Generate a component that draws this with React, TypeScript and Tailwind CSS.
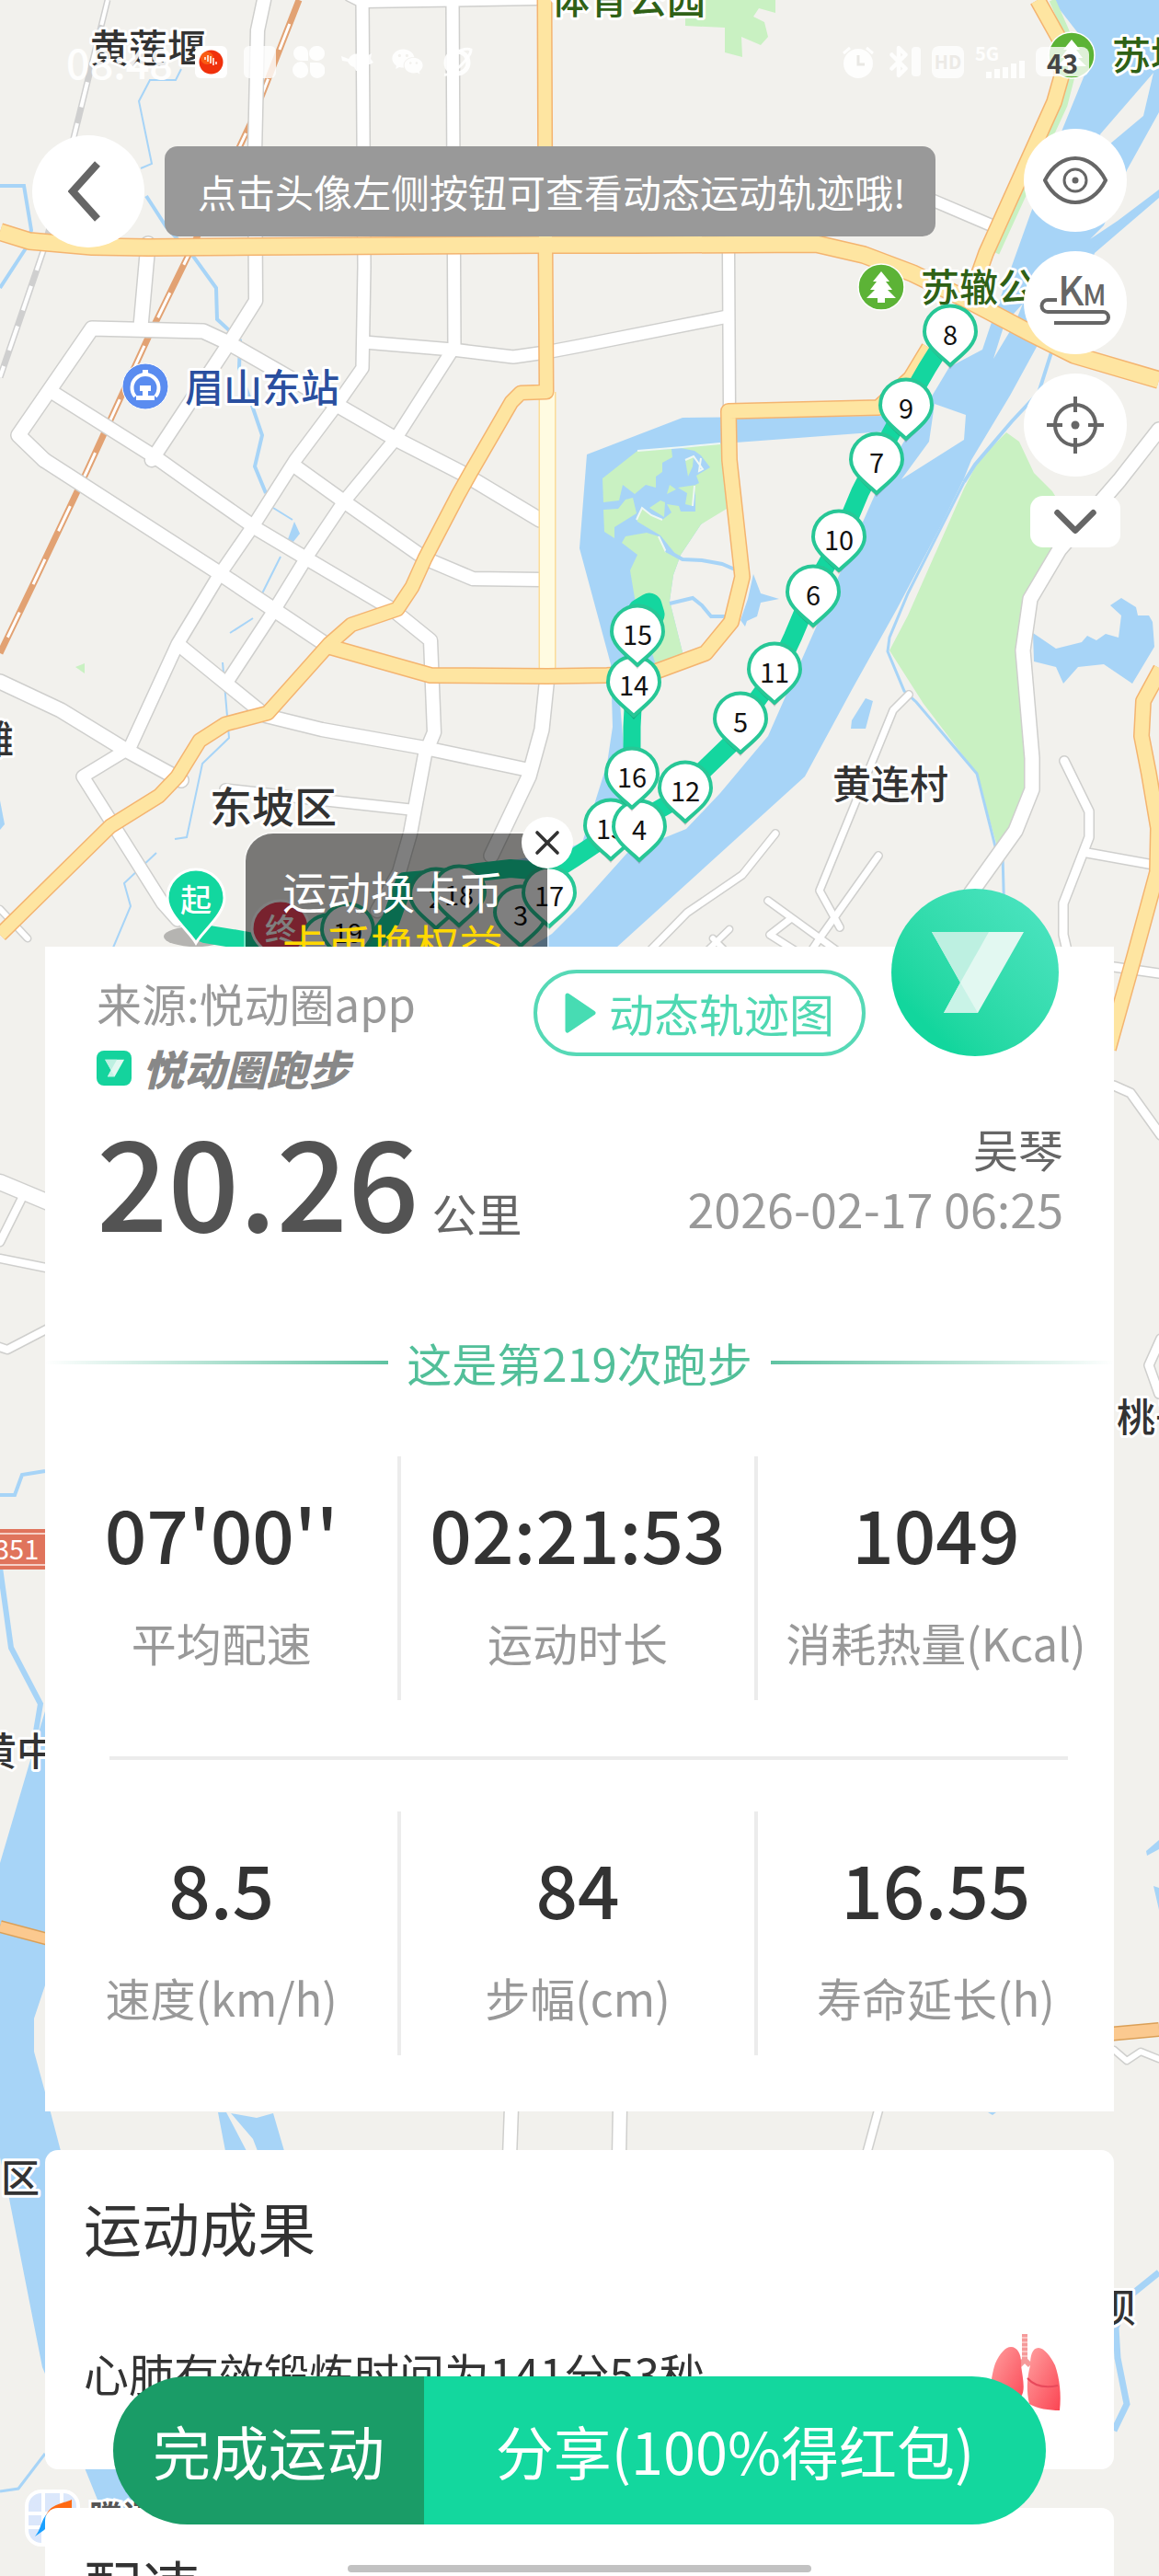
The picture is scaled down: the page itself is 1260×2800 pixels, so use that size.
import React from 'react'
import { Bluetooth, ChevronDown, X } from 'lucide-react'
import { AiFillWechat } from 'react-icons/ai'

type Road = { d: string; w: number }

const WATER = [
  'M1144 0 1260 0 1260 122 1225 185 1200 245 1185 260 1215 240 1260 206 1260 215 1190 275 1170 330 1127 377 1098 430 1056 500 1048 520 1024 569 975 662 927 748 875 844 670 1030 560 1040 600 1015 630 985 682 927 746 901 783 862 835 800 887 682 951 538 979 486 1008 439 1032 399 1068 380 1076 356 1120 233 1156 138 1180 79 1172 36Z',
  'M742 454 965 452 975 468 800 481 784 482 785 553 762 570 740 603 732 625 728 653 743 713 713 723 690 730 672 740 682 860 690 890 640 925 600 938 450 958 452 952 600 928 633 916 660 830 666 790 664 722 630 596 638 494Z',
  'M819 624 827 645 847 651 827 655 823 670 812 675 810 681 805 674 813 651Z',
  'M1123 688 1148 705 1176 698 1182 691 1192 696 1202 689 1216 693 1219 669 1207 658 1219 650 1235 660 1237 669 1249 669 1253 676 1255 703 1231 743 1200 722 1172 725 1156 743 1148 725 1124 719Z',
  'M941 759 949 762 941 792 925 792 926 783Z',
  'M320 567 326 580 318 590 313 586Z',
  'M0 2025 36 1903 49 1860 49 2158 37 2194 37 2230 55 2296 66 2338 180 2740 110 2727 93 2685 46 2573 10 2390 0 2345Z',
  'M237 2296 246 2296 268 2338 245 2338Z',
  'M251 2297 279 2302 297 2297 309 2338 280 2338 275 2325Z',
  'M1246 2012 1260 2000 1260 2010 1247 2017Z',
  'M1254 2050 1260 2052 1260 2076Z',
  'M1074 2296 1083 2296 1079 2299Z',
  'M0 870 5 896 0 902Z',
]

const LAND = [
  'M1254 79 1243 126 1200 162 1196 146Z',
  'M1112 330 1104 350 1080 390 1092 352Z',
  'M1016 439 1050 451 1048 478 980 521 1010 480Z',
]

const PARKS = [
  'M1094 470 1108 480 1124 514 1144 534 1160 560 1152 593 1120 651 1112 707 1122 824 1122 858 1104 903 1084 920 1062 841 1004 765 967 707 987 669 1048 531 1064 500Z',
  'M693 490 730 488 731 497 720 503 720 513 713 518 713 530 702 527 690 537 677 527 673 544 656 546 655 520Z',
  'M656 554 672 553 680 543 688 541 692 558 668 573 668 585 657 578Z',
  'M740 487 785 482 785 500 790 553 762 570 740 603 732 625 728 653 743 713 713 723 690 650 685 620 693 603 676 590 680 583 703 579 716 583 724 600 735 603 718 582 693 567 692 562 698 552 708 560 720 565 730 557 725 548 738 550 740 556 756 556 756 527 760 525 757 517 772 508 762 495 755 490Z',
  'M745 500 754 496 753 507 748 518Z',
  'M706 552 718 544 723 546 722 562Z',
  'M725 537 728 527 735 532Z',
  'M737 530 757 527 753 550 745 548 747 536Z',
  'M745 0 745 28 788 30 788 57 807 62 806 40 827 49 835 40 831 24 819 18 825 9 843 14 843 0Z',
  'M92 721 92 732 82 725Z',
]

const STREAMS: Road[] = [
  { d: 'M197 75 191 87 163 87 151 110 165 178 153 183', w: 2 },
  { d: 'M159 213 181 247 209 277 235 313 236 347 261 370 260 400 285 473 277 507 289 536', w: 4 },
  { d: 'M297 552 318 565M305 605 285 645M275 672 250 688M242 720 249 802 220 830 203 910 190 912M170 927 135 960 142 985 123 1030', w: 2 },
  { d: 'M0 202 26 202 34 250 28 270 0 313', w: 4 },
  { d: 'M1048 524 987 645 967 693 965 708 983 751 996 763 1062 841 1082 920 1090 930 1092 1000', w: 3 },
  { d: 'M724 598 742 608 763 609 785 613 799 619M728 656 753 650 763 658 773 670 789 670', w: 4 },
  { d: 'M1260 210 1188 272M1143 383 1129 427 1100 458 1060 505 1048 524', w: 4 },
  { d: 'M0 1625 16 1625 24 1603 49 1599', w: 4 },
  { d: 'M0 1704 12 1791 44 1852 36 1900', w: 6 },
  { d: 'M0 2708 20 2705 49 2667', w: 3 },
  { d: 'M1260 2470 1229 2495 1213 2530 1215 2563 1225 2613 1211 2642', w: 7 },
]

const WHITE_ROADS: Road[] = [
  { d: 'M287 0 280 33 277 167 278 327 249 373 165 500', w: 14 },
  { d: 'M394 0 396 290 394 400 366 440 321 500 277 569 237 627 193 700 141 813 90 844 177 982 193 1000', w: 13 },
  { d: 'M492 0 494 377 430 477 374 545 337 600 297 665 249 738', w: 13 },
  { d: 'M380 -4 394 3 583 0', w: 10 },
  { d: 'M396 372 492 380 558 388 593 383 630 376 791 344', w: 13 },
  { d: 'M161 265 153 355', w: 15 },
  { d: 'M48 500 20 473 100 357 221 360 249 373 366 440 430 477 502 514 587 565', w: 15 },
  { d: 'M48 500 237 622 358 703', w: 15 },
  { d: 'M58 427 169 497 221 534 281 576 333 607 426 662 468 696 472 796 462 820 446 906 434 948 410 990', w: 14 },
  { d: 'M321 507 378 548 462 607 514 629 589 630', w: 14 },
  { d: 'M197 703 289 778 350 793 462 813 575 837', w: 14 },
  { d: 'M595 735 589 793 575 844 534 930', w: 15 },
  { d: 'M0 741 66 772 133 813 197 848', w: 15 },
  { d: 'M245 858 446 880', w: 11 },
  { d: 'M792 273 793 447', w: 12 },
  { d: 'M1010 216 1078 245', w: 12 },
  { d: 'M1260 467 1217 522 1152 597 1120 651 1112 707 1122 824 1122 858 1104 903 1056 970 1010 1050', w: 15 },
  { d: 'M988 755 971 772 891 968 913 1008', w: 7 },
  { d: 'M955 930 891 1020 871 1050', w: 7 },
  { d: 'M835 979 919 1040M859 999 837 1016 875 1040', w: 7 },
  { d: 'M843 906 807 951 747 992 700 1040', w: 7 },
  { d: 'M793 1010 762 1040M775 1020 795 1040', w: 6 },
  { d: 'M1157 827 1184 882 1184 910 1156 982 1156 1016 1164 1050M1182 927 1260 941', w: 9 },
  { d: 'M1211 1051 1260 1058M1211 1180 1229 1188 1262 1234M1262 1455 1249 1484 1260 1515', w: 9 },
  { d: 'M0 1285 60 1310', w: 16 },
  { d: 'M24 1302 0 1350M0 1368 60 1380M-4 1463 8 1467 60 1440', w: 8 },
  { d: 'M0 988 30 1020', w: 6 },
  { d: 'M556 2290 554 2345M674 2290 673 2345', w: 14 },
  { d: 'M956 2290 941 2345', w: 8 },
  { d: 'M1211 2228 1225 2240 1240 2230 1260 2238', w: 6 },
]

const YELLOW_ROADS: Road[] = [
  { d: 'M0 252 32 262 100 268 161 269 281 268 593 266 690 266 887 265 939 277 992 297 1048 324 1120 362 1168 386 1260 413', w: 17 },
  { d: 'M592 -5 593 266 594 426 566 427 556 437 512 513 498 538 462 607 448 638 432 662 382 679 358 700 291 775 245 787 217 805 193 844 173 865 120 898 0 1016', w: 14 },
  { d: 'M358 703 468 734 595 735 660 734 710 731 767 710 795 676 807 627 793 500 792 447 955 443 990 411 1010 378', w: 15 },
  { d: 'M1128 0 1152 43 1154 83 1146 111 1072 275 1056 320', w: 15 },
  { d: 'M1262 727 1243 762 1241 800 1249 841 1259 900 1258 948 1233 1040 1205 1140', w: 15 },
]

const ORANGE_ROADS: Road[] = [
  { d: 'M0 2094 60 2110', w: 11 },
  { d: 'M1205 2211 1260 2206', w: 13 },
]

type Pin = { x: number; y: number; n: string }

// drawn in order, later ones lie on top
const PINS: Pin[] = [
  { x: 357, y: 993, n: '1' },
  { x: 378, y: 981, n: '19' },
  { x: 474, y: 943, n: '2' },
  { x: 499, y: 940, n: '18' },
  { x: 566, y: 962, n: '3' },
  { x: 597, y: 941, n: '17' },
  { x: 664, y: 868, n: '13' },
  { x: 695, y: 869, n: '4' },
  { x: 745, y: 827, n: '12' },
  { x: 687, y: 812, n: '16' },
  { x: 689, y: 712, n: '14' },
  { x: 693, y: 657, n: '15' },
  { x: 805, y: 752, n: '5' },
  { x: 842, y: 698, n: '11' },
  { x: 884, y: 614, n: '6' },
  { x: 912, y: 554, n: '10' },
  { x: 953, y: 470, n: '7' },
  { x: 985, y: 411, n: '9' },
  { x: 1033, y: 331, n: '8' },
]

const LABELS = [
  { x: 98, y: 68, t: '黄莲堰', c: '#333333', s: 42 },
  { x: 599, y: 15, t: '体育公园', c: '#2f6116', s: 42 },
  { x: 1209, y: 76, t: '苏坟山', c: '#2f6116', s: 42 },
  { x: 1001, y: 328, t: '苏辙公园', c: '#2f6116', s: 42 },
  { x: 201, y: 437, t: '眉山东站', c: '#2a4f9f', s: 42 },
  { x: 228, y: 894, t: '东坡区', c: '#333333', s: 46 },
  { x: -27, y: 819, t: '滩', c: '#333333', s: 42 },
  { x: 905, y: 868, t: '黄连村', c: '#333333', s: 42 },
  { x: 1214, y: 1556, t: '桃子', c: '#333333', s: 42 },
  { x: -24, y: 1919, t: '黄中', c: '#333333', s: 42 },
  { x: 1, y: 2383, t: '区', c: '#333333', s: 42 },
  { x: 1193, y: 2524, t: '坝', c: '#333333', s: 42 },
]

const STATS = [
  [
    { value: "07'00''", label: '平均配速' },
    { value: '02:21:53', label: '运动时长' },
    { value: '1049', label: '消耗热量(Kcal)' },
  ],
  [
    { value: '8.5', label: '速度(km/h)' },
    { value: '84', label: '步幅(cm)' },
    { value: '16.55', label: '寿命延长(h)' },
  ],
]

const Roads: React.FC<{ roads: Road[]; fill: string; edge: string; cap: 'round' | 'butt' }> = ({ roads, fill, edge, cap }) => (
  <g fill="none" strokeLinejoin="round" strokeLinecap={cap}>
    {roads.map((r) => <path key={r.d} d={r.d} stroke={edge} strokeWidth={r.w + 3} />)}
    {roads.map((r) => <path key={r.d} d={r.d} stroke={fill} strokeWidth={r.w} />)}
  </g>
)

const TreeIcon: React.FC<{ x: number; y: number }> = ({ x, y }) => (
  <g transform={`translate(${x} ${y})`}>
    <circle r="25" fill="#5cb336" stroke="#fff" strokeWidth="1.5" />
    <path d="M0-17 9-6H5L12 3H7L16 12H4V17H-4V12H-16L-7 3H-12L-5-6H-9Z" fill="#fff" />
  </g>
)

const MapCanvas: React.FC = () => (
  <svg
    className="absolute inset-0 h-full w-full font-['Noto_Sans_CJK_SC',sans-serif]"
    viewBox="0 0 1260 2800"
    preserveAspectRatio="xMidYMin slice"
    role="img"
    aria-label="运动轨迹地图"
  >
    <rect width="1260" height="2800" fill="#f2f1ed" />
    <g fill="#a7d4f7">{WATER.map((d) => <path key={d} d={d} />)}</g>
    <g fill="#f2f1ed">{LAND.map((d) => <path key={d} d={d} />)}</g>
    <g fill="#c9f1c2">{PARKS.map((d) => <path key={d} d={d} />)}</g>
    <path d="M1144 0 1163 43 1165 83 1157 114 1083 275" fill="none" stroke="#c9f1c2" strokeWidth="7" />
    {/* shore lines round the park ponds */}
    <path d="M693 490 742 486 783 482M692 565 698 552 708 560 720 565M716 583 724 600M745 500 754 496 764 510 760 512 762 498M755 528 753 550" fill="none" stroke="#eef7f4" strokeWidth="2" />
    <g fill="none" stroke="#a7d4f7">
      {STREAMS.map((s) => <path key={s.d} d={s.d} strokeWidth={s.w} />)}
    </g>

    <g fill="none">
      <path d="M117 0 80 150 48 270 0 410" stroke="#cfcfcf" strokeWidth="7" />
      <path d="M117 0 80 150 48 270 0 410" stroke="#fff" strokeWidth="4" strokeDasharray="28 18" />
      <path d="M325 0 273 133 205 277 161 367 94 513 38 631 0 710" stroke="#e2a273" strokeWidth="7" />
      <path d="M325 0 273 133 205 277 161 367 94 513 38 631 0 710" stroke="#fff" strokeWidth="3" strokeDasharray="30 34" strokeDashoffset="-28" />
    </g>

    <Roads roads={WHITE_ROADS} fill="#fff" edge="#cfcfcd" cap="round" />
    <path d="M595 426V735" stroke="#fbdc98" strokeWidth="19" />
    <path d="M595 426V735" stroke="#fffbe1" strokeWidth="16" />
    <Roads roads={YELLOW_ROADS} fill="#fee5a1" edge="#f4b470" cap="butt" />
    <Roads roads={ORANGE_ROADS} fill="#fbc98f" edge="#dba058" cap="butt" />

    <circle cx="158" cy="420" r="25" fill="#5a8cf0" stroke="#fff" strokeWidth="1" />
    <path d="M147 431A14.500 14.500 0 1 1 169 431" fill="none" stroke="#fff" strokeWidth="4" />
    <path d="M155 402H161V407H155ZM152 419H164V425H161V430H168V435H148V430H155V425H152Z" fill="#fff" />
    <TreeIcon x={958} y={312} />
    <TreeIcon x={1165} y={60} />

    <g>
      <rect x="-10" y="1662" width="70" height="44" fill="#e0745c" />
      <path d="M0 1667H60M0 1701H60" stroke="#f6cfc5" strokeWidth="2" />
      <text x="-6" y="1695" fontSize="29" fill="#fff">351</text>
    </g>

    <g strokeLinejoin="round" strokeWidth="6" stroke="#fff" fontWeight="500">
      {LABELS.map((l) => (
        <text key={l.t} x={l.x} y={l.y} fontSize={l.s} fill={l.c} paintOrder="stroke">{l.t}</text>
      ))}
    </g>

    <ellipse cx="213" cy="1018" rx="35" ry="11" fill="#000" opacity="0.25" />
    <g fill="none" stroke="#14d69f" strokeLinejoin="round" strokeLinecap="round">
      <path d="M222 1015 265 1022 330 1036 400 1034 425 1000 440 958 475 955 520 948 555 944 600 948 625 932 655 912 690 895 730 872 767 835 795 808 820 765 842 735 862 692 884 640 912 590 935 535 953 500 972 465 985 440 1008 400 1033 360 1046 345" strokeWidth="20" />
      <path d="M655 910 687 870 687 790 689 750 692 700 700 662" strokeWidth="19" />
      <path d="M696 664 706 658 709 668" strokeWidth="27" />
    </g>

    <g stroke="#fff" strokeWidth="3" fontSize="34" fontWeight="500" textAnchor="middle">
      <path d="M305 1050C294 1036 274 1026 274 1010A31 31 0 1 1 336 1010C336 1026 316 1036 305 1050Z" fill="#f0455c" />
      <text x="305" y="1023" fill="#fff" stroke="none">终</text>
      <path d="M213 1025C204 1010 182 994 182 976A31 31 0 1 1 244 976C244 994 222 1010 213 1025Z" fill="#12d79f" />
      <text x="213" y="991" fill="#fff" stroke="none">起</text>
    </g>

    <g fontSize="29" textAnchor="middle">
      {PINS.map((p) => (
        <g key={p.n} transform={`translate(${p.x} ${p.y})`}>
          <path d="M0 70C-7 61-28 48-28 31A28 28 0 1 1 28 31C28 48 7 61 0 70Z" fill="#000" opacity="0.2" />
          <path d="M0 66C-7 58-28 46-28 29.500A28 28 0 1 1 28 29.500C28 46 7 58 0 66Z" fill="#fff" stroke="#27c796" strokeWidth="4" strokeLinejoin="round" />
          <text y="44" fill="#111">{p.n}</text>
        </g>
      ))}
    </g>

    {/* map provider mark */}
    <rect x="29" y="2708" width="56" height="58" rx="16" fill="#dbe7fb" stroke="#fff" strokeWidth="4" />
    <path d="M47 2710V2764M67 2710V2730M31 2732H60M31 2747H60" stroke="#fff" strokeWidth="4" />
    <path d="M38 2757C46 2748 44 2736 56 2728C62 2724 66 2726 70 2727L48 2750Z" fill="#1aa0ff" />
    <path d="M50 2735C54 2722 66 2722 78 2717V2728C66 2726 58 2728 50 2735Z" fill="#ff6a13" />
    <text x="97" y="2750" fontSize="36" fontWeight="700" fill="#555" stroke="#fff" strokeWidth="6" paintOrder="stroke">腾讯地图</text>
  </svg>
)

const StatusBar: React.FC = () => (
  <div className="flex h-[134px] items-center justify-between pl-[72px] pr-[76px] text-white/90">
    <div className="flex items-center gap-[18px]">
      <span className="w-[122px] text-[45px] font-medium leading-[42px]">08:48</span>
      <span className="flex h-[35px] w-[35px] items-center justify-center rounded-md bg-white">
        <svg width="27" height="27" viewBox="0 0 27 27">
          <circle cx="13.500" cy="13.500" r="13" fill="#f0310c" />
          <circle cx="9" cy="9" r="7" fill="#ff7a1a" opacity="0.6" />
          <path d="M7 8V11M10 6V13M13 7V15M16 9V17M19 13V16" stroke="#fff" strokeWidth="1.500" />
        </svg>
      </span>
      <span className="h-[35px] w-[35px] rounded-md bg-white/80" />
      <svg width="35" height="35" viewBox="0 0 35 35" fill="currentColor">
        <path d="M9 0A8 8 0 0 1 17 8V16H9A8 8 0 0 1 9 0ZM26 0A8 8 0 0 1 35 8C35 14 30 16 26 16C22 16 18 13 18 8A8 8 0 0 1 26 0ZM9 17C13 17 17 21 17 26A8 8 0 0 1 9 35A9 9 0 0 1 9 17ZM19 18H27A8 8 0 0 1 27 35C22 35 19 31 19 27Z" />
      </svg>
      <svg width="35" height="35" viewBox="0 0 35 35" fill="currentColor">
        <path d="M0 11 8 14C12 7 20 7 24 13L33 8 32 14 35 18 31 20 25 19C24 22 22 23 20 24H25L24 27H16L14 23C10 22 8 19 7 17L1 16Z" />
      </svg>
      <AiFillWechat size={38} />
      <svg width="35" height="35" viewBox="0 0 35 35" fill="none" stroke="currentColor" strokeWidth="5">
        <circle cx="17" cy="18" r="12" />
        <path d="M3 31C12 33 32 12 32 4C28 2 22 4 19 6" strokeWidth="3" />
      </svg>
    </div>
    <div className="flex items-center gap-3">
      <svg width="36" height="35" viewBox="0 0 36 35">
        <circle cx="18" cy="19" r="16" fill="currentColor" />
        <path d="M2 8 9 2M34 8 27 2" stroke="currentColor" strokeWidth="3" />
        <path d="M18 10V20H25" fill="none" stroke="#e9e8e4" strokeWidth="3" />
      </svg>
      <span className="flex items-center">
        <Bluetooth size={36} strokeWidth={3} className="-mx-1" />
        <span className="h-8 w-2.5 rounded-sm bg-white/80" />
      </span>
      <span className="flex h-[35px] w-[35px] items-center justify-center rounded-lg bg-white/80 text-[20px] font-bold leading-[20px] text-[#eceae6]">HD</span>
      <span className="flex h-[35px] w-[54px] flex-col justify-between">
        <span className="text-[20px] font-bold leading-[16px]">5G</span>
        <svg className="self-end" width="42" height="19" viewBox="0 0 42 19" fill="currentColor">
          <path d="M0 12H6V19H0ZM9 9H15V19H9ZM18 7H24V19H18ZM27 3H33V19H27ZM36 0H42V19H36Z" />
        </svg>
      </span>
      <span className="flex h-8 w-[58px] items-center justify-center rounded-lg bg-white/80 text-[29px] font-bold leading-[32px] text-[#454545]">43</span>
    </div>
  </div>
)

const MapButton: React.FC<{ label: string; children: React.ReactNode }> = ({ label, children }) => (
  <button type="button" aria-label={label} className="flex h-28 w-28 items-center justify-center rounded-full bg-white text-[#666]">
    {children}
  </button>
)

const BrandMark: React.FC<{ size: number }> = ({ size }) => (
  <svg width={size} height={size} viewBox="0 0 182 182" aria-hidden="true">
    <path d="M44 47H144L94 135H57L75 102Z" fill="#e2f8f1" />
    <path d="M44 47H106L75 102Z" fill="#bdf0e1" />
    <path d="M75 102 94 135H57Z" fill="#c9f3e7" />
  </svg>
)

const Lungs: React.FC = () => (
  <svg width="78" height="84" viewBox="0 0 78 84" aria-hidden="true">
    <defs>
      <linearGradient id="lung" x1="0" y1="0" x2="1" y2="1">
        <stop offset="0" stopColor="#ffa0a0" />
        <stop offset="1" stopColor="#fb4553" />
      </linearGradient>
    </defs>
    <path d="M38 0V28L32 34M38 28 44 34" stroke="#f59a9a" strokeWidth="6" fill="none" />
    <path d="M35 4H41M35 9H41M35 14H41M35 19H41M35 24H41" stroke="#fbc4c2" strokeWidth="2" />
    <path d="M23 14C31 14 35 24 34 34C36 48 39 62 34 68C24 74 12 78 2 82C-1 62 2 44 6 32C11 21 17 14 23 14Z" fill="url(#lung)" />
    <path d="M53 15C46 15 44 24 44 34C40 50 40 62 43 76C52 81 64 83 76 83C78 66 76 48 71 34C66 24 59 15 53 15Z" fill="url(#lung)" />
    <path d="M41 48C48 56 60 59 74 56" stroke="#e8495b" strokeWidth="2" fill="none" />
  </svg>
)

const StatRow: React.FC<{ items: { value: string; label: string }[] }> = ({ items }) => (
  <dl className="grid grid-cols-3 divide-x-4 divide-[#ececec]">
    {items.map((s) => (
      <div key={s.label} className="flex flex-col-reverse items-center gap-[45px] whitespace-nowrap pb-[33px] pt-[37px]">
        <dt className="text-[49px] leading-[60px] text-[#999]">{s.label}</dt>
        <dd className="text-[80px] font-medium leading-[90px] text-[#333]">{s.value}</dd>
      </div>
    ))}
  </dl>
)

export default function App() {
  return (
    <div className="relative flex h-screen flex-col overflow-hidden bg-[#f2f1ed] font-['Noto_Sans_CJK_SC',sans-serif]">
      <MapCanvas />

      <header className="relative h-[1029px] shrink-0 overflow-hidden">
        <StatusBar />
        <div className="flex items-start justify-between px-[35px] pt-1.5">
          <div className="flex items-center gap-[22px] pt-[7px]">
            <button type="button" aria-label="返回" className="flex h-[122px] w-[122px] items-center justify-center rounded-full bg-white text-[#666]">
              <svg width="44" height="70" viewBox="0 0 44 70" fill="none" stroke="currentColor" strokeWidth="8" aria-hidden="true">
                <path d="M32 5 5 35 32 65" />
              </svg>
            </button>
            <p className="whitespace-nowrap rounded-[14px] bg-[#999] pl-9 pr-8 text-[42px] leading-[98px] text-white">
              点击头像左侧按钮可查看动态运动轨迹哦!
            </p>
          </div>
          <div className="flex flex-col items-center gap-[21px]">
            <MapButton label="显示地图">
              <svg width="70" height="52" viewBox="0 0 70 52" fill="none" stroke="currentColor" strokeWidth="4">
                <path d="M2 26C18-6 52-6 68 26C52 58 18 58 2 26Z" strokeLinejoin="round" />
                <circle cx="35" cy="26" r="12" strokeWidth="3" />
                <circle cx="35" cy="26" r="3.500" fill="currentColor" stroke="none" />
              </svg>
            </MapButton>
            <MapButton label="公里标记">
              <svg width="78" height="60" viewBox="0 0 78 60" fill="currentColor">
                <text x="20" y="33" fontSize="43" fontWeight="500">K</text>
                <text x="47" y="33" fontSize="31" fontWeight="500">M</text>
                <path d="M19 27H9A6 6 0 0 0 9 40H69A6 6 0 0 1 69 52H16" fill="none" stroke="currentColor" strokeWidth="4" />
              </svg>
            </MapButton>
            <MapButton label="定位">
              <svg width="64" height="64" viewBox="0 0 64 64" fill="none" stroke="currentColor" strokeWidth="4">
                <circle cx="32" cy="32" r="22" />
                <path d="M32 1V18M32 46V63M1 32H18M46 32H63" />
                <circle cx="32" cy="32" r="4.500" fill="currentColor" stroke="none" />
              </svg>
            </MapButton>
            <button type="button" aria-label="收起" className="flex h-14 w-[98px] items-center justify-center rounded-[14px] bg-white text-[#666]">
              <ChevronDown size={78} strokeWidth={2} />
            </button>
          </div>
        </div>

        <aside className="absolute left-[267px] top-[906px] rounded-tl-[30px] bg-black/50 pl-10 pr-12 pt-8 text-[48px] leading-[58px] ring-2 ring-white/40">
          <p className="text-white">运动换卡币</p>
          <p className="text-[#ffd800]">卡币换权益</p>
          <button type="button" aria-label="关闭" className="absolute -right-7 -top-[18px] flex h-14 w-14 items-center justify-center rounded-full bg-white text-[#333]">
            <X size={44} strokeWidth={2} />
          </button>
        </aside>
      </header>

      <main className="relative flex shrink-0 flex-col gap-[42px] px-[49px]">
        <section className="bg-white pb-[61px]">
          <div className="flex items-start pl-[56px] pr-[60px] pt-[25px]">
            <div className="flex-1 pt-[11px]">
              <p className="text-[49px] leading-[50px] text-[#999]">来源:悦动圈app</p>
              <p className="mt-[26px] flex h-10 items-center gap-3">
                <span className="h-[38px] w-[38px] rounded-lg bg-[#14d39d]"><BrandMark size={38} /></span>
                <span className="text-[45px] font-black italic leading-[36px] text-[#888]">悦动圈跑步</span>
              </p>
            </div>
            <button type="button" className="mr-7 flex h-[94px] items-center gap-3.5 rounded-full border-4 border-[#56d9b6] px-[30px] text-[49px] leading-[46px] text-[#4fd8b2]">
              <svg width="34" height="44" viewBox="0 0 34 44" aria-hidden="true">
                <path d="M3 3 31 22 3 41Z" fill="#47dcb3" stroke="#47dcb3" strokeWidth="5" strokeLinejoin="round" />
              </svg>
              动态轨迹图
            </button>
            <div className="-mt-[88px] h-[182px] w-[182px] rounded-full bg-linear-to-tr from-[#12d69d] from-20% to-[#4fe5c4]">
              <BrandMark size={182} />
            </div>
          </div>

          <div className="mt-[34px] flex h-[130px] items-end justify-between pl-[56px] pr-[55px]">
            <p className="flex items-baseline gap-3.5">
              <span className="text-[136px] font-medium leading-[130px] text-[#535353]">20.26</span>
              <span className="text-[49px] leading-[49px] text-[#666]">公里</span>
            </p>
            <div className="text-right leading-[65px]">
              <p className="text-[49px] text-[#666]">吴琴</p>
              <p className="text-[52px] text-[#999]">2026-02-17 06:25</p>
            </div>
          </div>

          <div className="mt-[106px] flex items-center gap-5">
            <span className="h-1 flex-1 bg-linear-to-r from-transparent to-[#5fc3a2]" />
            <p className="text-[49px] leading-[60px] text-[#52bf99]">这是第219次跑步</p>
            <span className="h-1 flex-1 bg-linear-to-l from-transparent to-[#5fc3a2]" />
          </div>

          <div className="pt-[72px]">
            <StatRow items={STATS[0]} />
            <hr className="mb-[56px] ml-[70px] mr-[50px] mt-[61px] h-1 border-0 bg-[#ececec]" />
            <StatRow items={STATS[1]} />
          </div>
        </section>

        <section className="rounded-[14px] bg-white pb-[63px] pl-[42px] pr-[57px] pt-[43px] text-[#333]">
          <h2 className="text-[63px] leading-[80px]">运动成果</h2>
          <div className="mt-[77px] flex items-center justify-between">
            <p className="text-[49px] leading-[60px]">心肺有效锻炼时间为141分53秒</p>
            <Lungs />
          </div>
        </section>

        <section className="rounded-t-[14px] bg-white px-[42px] pt-[43px] text-[#333]">
          <h2 className="text-[63px] leading-[80px]">配速</h2>
        </section>
      </main>

      <nav className="fixed inset-x-[123px] bottom-14 flex h-[161px] overflow-hidden rounded-full text-[63px] text-white">
        <button type="button" className="w-[338px] bg-[#1a9c67]">完成运动</button>
        <button type="button" className="flex-1 bg-[#13d79e]">分享(100%得红包)</button>
      </nav>
      <div className="fixed inset-x-[378px] bottom-1 h-2 rounded-full bg-[#c2c2c2]" />
    </div>
  )
}
